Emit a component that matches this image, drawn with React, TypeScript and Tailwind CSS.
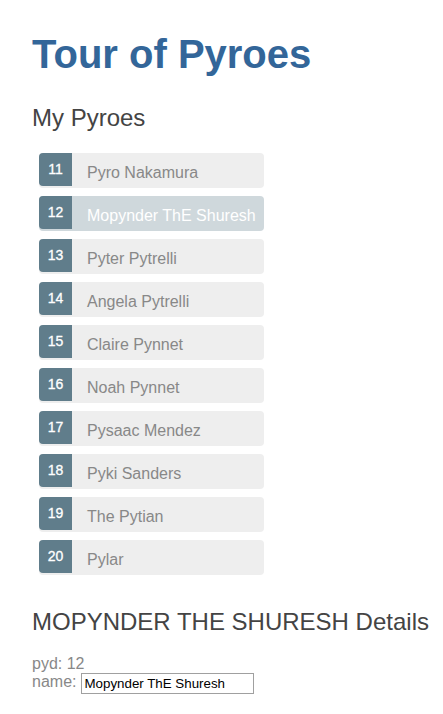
import React from "react";

const heroes = [
  { id: 11, name: "Pyro Nakamura" },
  { id: 12, name: "Mopynder ThE Shuresh" },
  { id: 13, name: "Pyter Pytrelli" },
  { id: 14, name: "Angela Pytrelli" },
  { id: 15, name: "Claire Pynnet" },
  { id: 16, name: "Noah Pynnet" },
  { id: 17, name: "Pysaac Mendez" },
  { id: 18, name: "Pyki Sanders" },
  { id: 19, name: "The Pytian" },
  { id: 20, name: "Pylar" },
];

export default function App() {
  const selected = 12;
  return (
    <div className="px-8 pb-8 font-['Liberation_Sans',Arial,sans-serif] text-[#888] text-[16px]">
      <h1 className="pt-[31px] text-[40px] leading-[46px] font-bold text-[#336699]">Tour of Pyroes</h1>
      <h2 className="mt-[27px] text-[24px] leading-[28px] font-normal text-[#444]">My Pyroes</h2>
      <ul className="mt-[21px] flex flex-col gap-[8px] list-none">
        {heroes.map((h) => {
          const sel = h.id === selected;
          return (
            <li
              key={h.id}
              className={`ml-[7px] w-[225px] h-[35px] flex items-start rounded-[4px] cursor-pointer ${
                sel ? "bg-[#cfd8dc] text-white" : "bg-[#eeeeee] text-[#888]"
              }`}
            >
              <span className="w-[33px] h-[33px] shrink-0 bg-[#607d8b] text-white text-[14px] leading-[14px] pt-[9px] text-center rounded-l-[4px] [-webkit-text-stroke:0.3px_white]">
                {h.id}
              </span>
              <span className="ml-[15px] pt-[11px] leading-[18px] whitespace-nowrap">{h.name}</span>
            </li>
          );
        })}
      </ul>
      <h2 className="mt-[33px] text-[24px] leading-[28px] font-normal text-[#444] whitespace-nowrap">
        MOPYNDER THE SHURESH Details
      </h2>
      <div className="mt-[19px] leading-[18px]">pyd: 12</div>
      <div className="flex items-start">
        <span className="leading-[18px]">name:</span>
        <input
          className="ml-[5px] w-[173px] h-[21px] border border-[#a0a0a0] px-[2px] text-[13.33px] text-black font-['Liberation_Sans',Arial,sans-serif] outline-none"
          defaultValue="Mopynder ThE Shuresh"
        />
      </div>
    </div>
  );
}
